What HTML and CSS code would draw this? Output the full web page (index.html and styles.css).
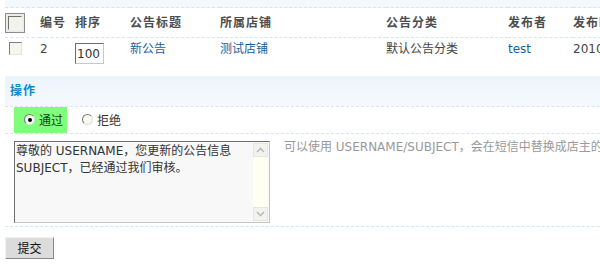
FILE: index.html
```html
<!DOCTYPE html>
<html lang="zh-CN">
<head>
  <meta charset="UTF-8">
  <title>公告审核</title>
  <link rel="stylesheet" href="styles.css">
</head>
<body>
  <div class="page">
    <table class="list">
      <colgroup>
        <col class="w-chk"><col class="w-id"><col class="w-sort"><col class="w-title">
        <col class="w-shop"><col class="w-cat"><col class="w-user"><col class="w-time">
      </colgroup>
      <tr class="top-band"><td colspan="8"></td></tr>
      <tr class="head">
        <th><span class="chk-big"><span class="chk"></span></span></th>
        <th>编号</th>
        <th>排序</th>
        <th>公告标题</th>
        <th>所属店铺</th>
        <th>公告分类</th>
        <th>发布者</th>
        <th>发布时间</th>
      </tr>
      <tr class="item">
        <td class="cell-chk"><span class="chk"></span></td>
        <td>2</td>
        <td><input class="sort-input" type="text" value="100"></td>
        <td><a href="#">新公告</a></td>
        <td><a href="#">测试店铺</a></td>
        <td>默认公告分类</td>
        <td><a href="#">test</a></td>
        <td>2010-08-12</td>
      </tr>
    </table>

    <div class="section-title">操作</div>

    <div class="opt-row">
      <label class="opt opt-on"><span class="radio checked"></span>通过</label>
      <label class="opt"><span class="radio"></span>拒绝</label>
    </div>

    <div class="msg-row">
      <div class="msg-box">
        <textarea class="msg" wrap="off">尊敬的 USERNAME，您更新的公告信息
SUBJECT，已经通过我们审核。</textarea>
        <div class="fake-scroll">
          <span class="sb-btn">
            <svg width="9" height="6" viewBox="0 0 9 6"><polyline points="1,5 4.5,1.5 8,5" fill="none" stroke="#bcbcbc" stroke-width="1.6"/></svg>
          </span>
          <span class="sb-track"></span>
          <span class="sb-btn">
            <svg width="9" height="6" viewBox="0 0 9 6"><polyline points="1,1 4.5,4.5 8,1" fill="none" stroke="#bcbcbc" stroke-width="1.6"/></svg>
          </span>
        </div>
      </div>
      <div class="hint">可以使用 USERNAME/SUBJECT，会在短信中替换成店主的用户名和公告标题</div>
    </div>

    <div class="submit-row">
      <button class="btn" type="button">提交</button>
    </div>
  </div>
</body>
</html>
```

FILE: styles.css
```css
body {
  margin: 0;
  overflow: hidden;
  font-family: "DejaVu Sans", "Noto Sans CJK SC", sans-serif;
  font-size: 12px;
  color: #444;
  background: #fff;
}
.page {
  padding-left: 5px;
  width: 700px;
}
a {
  color: #1b5e9e;
  text-decoration: none;
}
.list {
  border-collapse: collapse;
  table-layout: fixed;
  width: 688px;
}
.w-chk { width: 35px; }
.w-id { width: 35px; }
.w-sort { width: 55px; }
.w-title { width: 90px; }
.w-shop { width: 166px; }
.w-cat { width: 122px; }
.w-user { width: 65px; }
.w-time { width: 120px; }
.list th, .list td {
  padding: 0;
  text-align: left;
  white-space: nowrap;
  line-height: 12px;
}
.top-band td {
  height: 7px;
  background: #f3f8fc;
  border-bottom: 1px dashed #d3e5f4;
}
.head th {
  height: 29px;
  vertical-align: middle;
  font-weight: bold;
  letter-spacing: 1px;
  color: #4d4d4d;
  border-bottom: 1px dashed #d3e5f4;
}
.item td {
  height: 38px;
  vertical-align: top;
  padding-top: 5px;
  box-sizing: border-box;
}
.item td.cell-chk {
  padding-top: 4px;
  padding-left: 4px;
}
.chk {
  display: block;
  width: 13px;
  height: 13px;
  box-sizing: border-box;
  border: 1px solid;
  border-color: #7f7f7f #e4e4dc #e4e4dc #7f7f7f;
  background: #f6f6ee;
}
.chk-big {
  display: block;
  width: 20px;
  height: 20px;
  box-sizing: border-box;
  border: 1px solid #8c8c8c;
  background: #ececec;
  padding: 2px;
}
.chk-big .chk {
  width: 14px;
  height: 14px;
  border-color: #6f6f6f #f4f4f4 #f4f4f4 #6f6f6f;
  background: #f3f3ec;
}
.sort-input {
  width: 29px;
  height: 21px;
  box-sizing: border-box;
  margin: 0;
  padding: 0 0 0 1px;
  border: 1px solid;
  border-color: #6b6b6b #c8c8c8 #c8c8c8 #6b6b6b;
  font-family: "DejaVu Sans", sans-serif;
  font-size: 12px;
  color: #333;
  background: #fff;
}
.section-title {
  height: 30px;
  line-height: 30px;
  padding-left: 5px;
  background: linear-gradient(#ecf4fc, #f5f9fd);
  color: #0b8bc6;
  font-weight: bold;
  letter-spacing: 1px;
}
.opt-row {
  display: flex;
  align-items: stretch;
  height: 26px;
  padding-left: 9px;
  border-top: 1px dashed #d3e5f4;
  border-bottom: 1px dashed #d3e5f4;
}
.opt {
  display: flex;
  align-items: center;
  gap: 4px;
  color: #333;
}
.opt-on {
  background: #80fd7c;
  padding: 0 4px 0 10px;
  color: #1f3a1f;
}
.opt + .opt {
  margin-left: 15px;
}
.radio {
  position: relative;
  width: 11px;
  height: 11px;
  box-sizing: border-box;
  border-radius: 50%;
  border: 1px solid;
  border-color: #7a7a7a #e0e0d8 #e0e0d8 #7a7a7a;
  background: #f8f8f2;
}
.radio.checked::after {
  content: "";
  position: absolute;
  left: 2.5px;
  top: 2.5px;
  width: 4px;
  height: 4px;
  border-radius: 50%;
  background: #000;
}
.msg-row {
  display: flex;
  align-items: flex-start;
  gap: 14px;
  height: 93px;
  padding: 7px 0 0 9px;
  box-sizing: border-box;
  border-bottom: 1px dashed #d3e5f4;
}
.msg-box {
  display: flex;
  width: 256px;
  height: 82px;
  box-sizing: border-box;
  border: 1px solid;
  border-color: #6e6e6e #c4c4c4 #c4c4c4 #6e6e6e;
  background: #f8f8f8;
}
.msg {
  flex: 1;
  margin: 0;
  padding: 1px 0 0 1px;
  border: none;
  outline: none;
  resize: none;
  overflow: hidden;
  background: transparent;
  font-family: "DejaVu Sans", "Noto Sans CJK SC", sans-serif;
  font-size: 12px;
  line-height: 17px;
  color: #333;
}
.fake-scroll {
  display: flex;
  flex-direction: column;
  width: 15px;
  margin: 1px 1px 1px 0;
}
.sb-btn {
  display: flex;
  align-items: center;
  justify-content: center;
  height: 14px;
  box-sizing: border-box;
  border: 1px solid #e6e6de;
  background: #f2f2ee;
}
.sb-track {
  flex: 1;
  background: #fefff0;
}
.hint {
  color: #999;
  white-space: nowrap;
  line-height: 12px;
}
.submit-row {
  padding-top: 10px;
}
.btn {
  width: 49px;
  height: 22px;
  margin: 0;
  padding: 0;
  border: 1px solid;
  border-color: #f2f2f2 #8a8a8a #8a8a8a #f2f2f2;
  background: #dcdcdc;
  font-family: "Noto Sans CJK SC", sans-serif;
  font-size: 12px;
  color: #111;
}
```
